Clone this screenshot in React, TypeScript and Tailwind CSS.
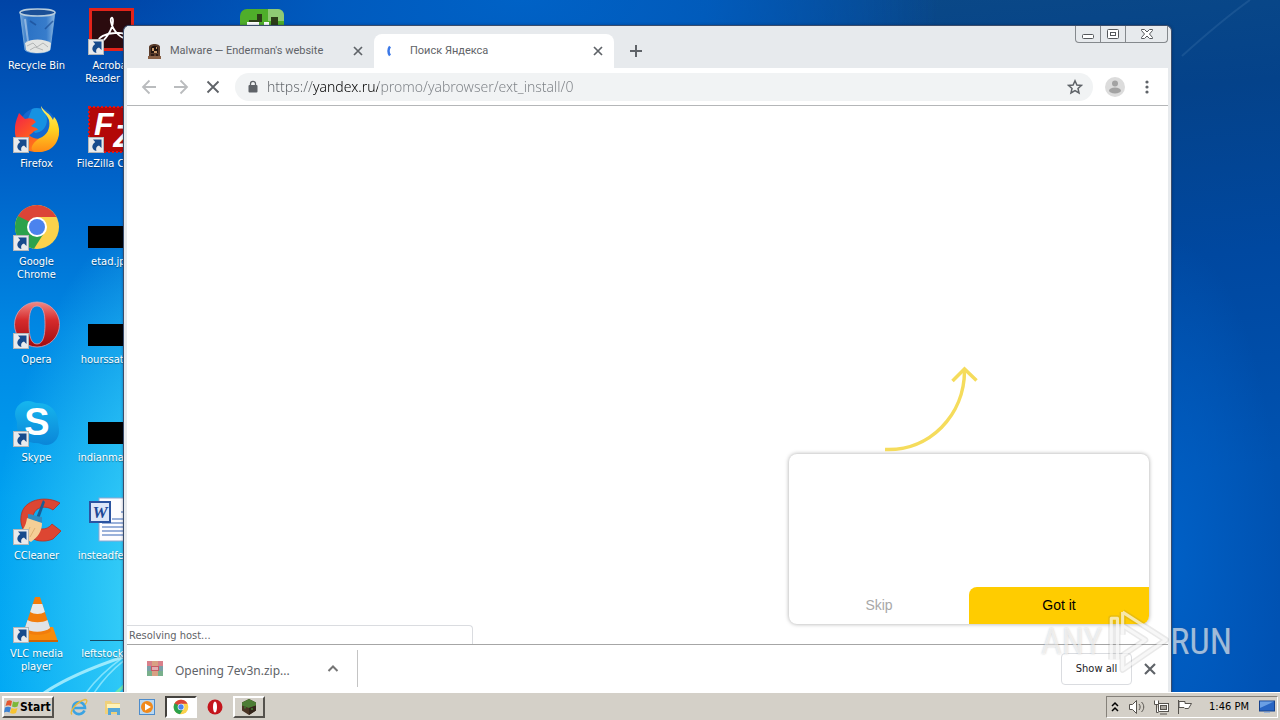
import type { ReactNode } from "react";

interface Shortcut {
  name: string;
  icon: ReactNode;
  linked?: boolean;
  place?: string;
}

const ShortcutArrow = () => (
  <svg className="absolute bottom-0 left-0 h-4 w-4" viewBox="0 0 16 16">
    <rect x="0.5" y="0.5" width="15" height="15" fill="#e9eaec" stroke="#b4b6b8" />
    <path d="M5 2.500h8.500V11L11 8.600c-2.600.8-3.400 2.400-2.600 5.400C4 13 2.600 8.400 7.200 5z" fill="#174a8c" />
  </svg>
);

const RecycleIcon = () => (
  <svg viewBox="0 0 48 48">
    <defs>
      <linearGradient id="bin" x1="0" x2="1" y1="0" y2="0">
        <stop offset="0" stopColor="#a9d0ee" stopOpacity="0.7" />
        <stop offset="0.25" stopColor="#4a8fd6" stopOpacity="0.6" />
        <stop offset="0.75" stopColor="#5c9ee0" stopOpacity="0.6" />
        <stop offset="1" stopColor="#b5d8f3" stopOpacity="0.8" />
      </linearGradient>
    </defs>
    <path d="M7 5l5 38c3 4 21 4 25 0l5-38z" fill="url(#bin)" stroke="#7fb0dc" strokeWidth="0.800" />
    <path d="M12 36c7-5 20-4 26 0l-1 7c-5 4-20 4-24 0z" fill="#e2e4e2" />
    <path d="M14 39l6-3 4 4 6-4 5 4M17 43l5-3 8 3" fill="none" stroke="#b3b6b6" />
    <ellipse cx="24.500" cy="5.500" rx="17.500" ry="3.500" fill="#1b4f96" stroke="#b8cddd" strokeWidth="1.500" />
    <path d="M32 22l8-8M17 14l6 4" fill="none" stroke="#1a4d96" strokeWidth="1.600" opacity="0.7" />
    <path d="M12 12l3 22" stroke="#fff" strokeWidth="2" opacity="0.4" />
  </svg>
);

const AcrobatIcon = () => (
  <svg viewBox="0 0 48 48">
    <rect x="1" y="1" width="45" height="43" fill="#e2231a" />
    <rect x="4" y="4" width="39" height="37" fill="#2b0b0e" />
    <path
      d="M11 34c-2-3 7-8 16-8 8-1 13 2 11 4-3 3-13-5-15-15-1-5 2-6 2-1 0 8-10 24-14 20z"
      fill="none"
      stroke="#fff"
      strokeWidth="1.800"
    />
  </svg>
);

const FirefoxIcon = () => (
  <svg viewBox="0 0 48 48">
    <defs>
      <linearGradient id="foxBody" x1="0" y1="0" x2="1" y2="1">
        <stop offset="0" stopColor="#f0204c" />
        <stop offset="0.45" stopColor="#ff5a20" />
        <stop offset="1" stopColor="#ffa516" />
      </linearGradient>
      <linearGradient id="foxTail" x1="0" y1="0" x2="0" y2="1">
        <stop offset="0" stopColor="#fff36b" />
        <stop offset="0.5" stopColor="#ffd321" />
        <stop offset="1" stopColor="#ff8a15" />
      </linearGradient>
    </defs>
    <circle cx="25" cy="21" r="18" fill="#1468cf" />
    <path d="M19 4c8-3 14 2 15 10 0 9-5 13-12 14l-8-12z" fill="#1692e2" />
    <path
      d="M2 24C2 17 4 14 6 8l6 6c3-1 5-1 8 0l3 3-5 4c3 2 6 1 7 4-5 0-5 4-9 5 5 5 13 5 18 0l12-1c-3 12-12 18-22 18C10 47 1 37 2 24z"
      fill="url(#foxBody)"
    />
    <path
      d="M28 1c0 5 6 8 8 14 2 9-3 16-9 18-7 4-13 13-3 14 14 1 23-9 22-23-1-7-3-10-5-12l-1 3C37 8 31 7 28 1z"
      fill="url(#foxTail)"
    />
  </svg>
);

const FileZillaIcon = () => (
  <svg viewBox="0 0 48 48">
    <rect x="1" y="2" width="46" height="45" fill="#b30808" stroke="#dd1717" strokeWidth="2" strokeDasharray="2 2" />
    <text x="6" y="30" fontFamily="Liberation Sans, sans-serif" fontSize="32" fontStyle="italic" fontWeight="700" fill="#fff">
      F<tspan dy="12">Z</tspan>
    </text>
  </svg>
);

const ChromeIcon = () => (
  <svg viewBox="0 0 48 48">
    <circle cx="24" cy="24" r="22" fill="#fbd24c" />
    <path d="M24 24L4.900 13A22 22 0 0 0 21 45.800L31 30z" fill="#2ba24c" />
    <path d="M24 24H13L4.900 13A22 22 0 0 1 43.500 14H24z" fill="#dc4437" />
    <path d="M4.900 13L14.500 29.500 19 20z" fill="#2ba24c" />
    <circle cx="24" cy="24" r="10" fill="#fff" />
    <circle cx="24" cy="24" r="8" fill="#4b83ee" />
  </svg>
);

const OperaIcon = () => (
  <svg viewBox="0 0 48 48">
    <defs>
      <linearGradient id="operaRed" x1="0" y1="0" x2="0" y2="1">
        <stop offset="0" stopColor="#f08a86" />
        <stop offset="0.4" stopColor="#d62b2c" />
        <stop offset="1" stopColor="#a00c10" />
      </linearGradient>
    </defs>
    <path
      fillRule="evenodd"
      d="M24 1a22 22 0 1 1 0 45a22 22 0 1 1 0-45zM24 5c-6 0-8 7-8 18.500s2 19.500 8 19.500 8-8 8-19.500S30 5 24 5z"
      fill="url(#operaRed)"
      stroke="#d8a0b0"
      strokeWidth="0.800"
    />
  </svg>
);

const SkypeIcon = () => (
  <svg viewBox="0 0 48 48">
    <defs>
      <linearGradient id="skypeBlue" x1="0" y1="0" x2="0" y2="1">
        <stop offset="0" stopColor="#16b6ee" />
        <stop offset="1" stopColor="#0a86d8" />
      </linearGradient>
    </defs>
    <path
      d="M15 2c4 0 7 2 9 2 12-1 21 8 21 19 0 3 1 5 1 9 0 8-6 14-13 14-4 0-6-2-10-2C11 44 3 34 4 24c0-3-2-5-2-9C2 8 8 2 15 2z"
      fill="url(#skypeBlue)"
    />
    <text x="24" y="36" textAnchor="middle" fontFamily="Liberation Sans, sans-serif" fontSize="38" fontWeight="700" fill="#fff">
      S
    </text>
  </svg>
);

const CCleanerIcon = () => (
  <svg viewBox="0 0 48 48">
    <path
      d="M47 6C35-1 14 1 9 15c-6 19 12 35 31 27l8-8-9-7c-7 9-19 5-19-6 0-10 11-14 20-8z"
      fill="#dd4632"
      stroke="#b8301f"
      strokeWidth="0.800"
    />
    <path d="M30 3l2 2-6 17-3-1z" fill="#1a5d95" />
    <path d="M15 17c5 0 9 3 14 3v6l-14-4z" fill="#318cc2" />
    <path d="M14 21l15 5c0 8-4 14-11 19L4 37c6-3 9-8 10-16z" fill="#f5cf96" />
    <path d="M17 30l-4 9M22 31l-5 9" stroke="#dfb071" fill="none" />
  </svg>
);

const VlcIcon = () => (
  <svg viewBox="0 0 48 48">
    <path d="M9 32h31l5 15H5z" fill="#f78b0d" />
    <path d="M5 45h40v2H5z" fill="#cf6404" />
    <path d="M22 2h5l11 34c-5 5-22 5-27 0z" fill="#f27d0c" />
    <path d="M19.800 9h9.500l2.600 8c-4 2.500-11 2.500-14.700 0z" fill="#e6eaee" />
    <path d="M14.500 25c5 3 15 3 20 0l2.600 8c-6 5-20 5-25.200 0z" fill="#e1e3e6" />
  </svg>
);

const WordIcon = () => (
  <svg viewBox="0 0 48 48">
    <rect x="11" y="1" width="36" height="43" fill="#fdfdff" stroke="#8fa7cf" />
    <path d="M14 26h30M14 30h30M14 34h30M14 38h30M24 22h20M33 15h12" stroke="#7a98ce" strokeWidth="1.500" />
    <rect x="2" y="5" width="20" height="20" fill="#dce6f8" stroke="#2b54a1" strokeWidth="2" />
    <text x="12" y="21" textAnchor="middle" fontFamily="Liberation Serif, serif" fontSize="17" fontWeight="700" fontStyle="italic" fill="#1d4796">
      W
    </text>
  </svg>
);

const BlackThumb = () => (
  <svg viewBox="0 0 48 48">
    <path d="M0 23h48v22H0z" fill="#000" />
  </svg>
);

const LineThumb = () => (
  <svg viewBox="0 0 48 48">
    <path d="M2 45.500h46" stroke="#174c66" />
  </svg>
);

const GreenAppIcon = () => (
  <svg viewBox="0 0 48 48">
    <rect x="2" y="2" width="44" height="44" rx="7" fill="#4fae2a" />
    <path d="M30 2h10a6 6 0 0 1 6 6v6H30z" fill="#8fca74" />
    <path d="M19 7h5v8h-5zM33 10h7v8h-7zM11 13h10v4H11z" fill="#2c3d18" />
    <path d="M9 15h12v4H9zM26 15h5v4h-5z" fill="#fff" />
  </svg>
);

const shortcuts: Shortcut[] = [
  { name: "Recycle Bin", icon: <RecycleIcon /> },
  { name: "Firefox", icon: <FirefoxIcon />, linked: true },
  { name: "Google\nChrome", icon: <ChromeIcon />, linked: true },
  { name: "Opera", icon: <OperaIcon />, linked: true },
  { name: "Skype", icon: <SkypeIcon />, linked: true },
  { name: "CCleaner", icon: <CCleanerIcon />, linked: true },
  { name: "VLC media\nplayer", icon: <VlcIcon />, linked: true },
  { name: "Acrobat\nReader DC", icon: <AcrobatIcon />, linked: true },
  { name: "FileZilla Client", icon: <FileZillaIcon />, linked: true },
  { name: "etad.jpg", icon: <BlackThumb /> },
  { name: "hourssat.jpg", icon: <BlackThumb /> },
  { name: "indianmar.jpg", icon: <BlackThumb /> },
  { name: "insteadfew.rtf", icon: <WordIcon /> },
  { name: "leftstock.jpg", icon: <LineThumb /> },
  { name: "", icon: <GreenAppIcon />, place: "col-start-4 row-start-1" },
];

const Wallpaper = () => (
  <>
    <div className="absolute inset-0 bg-[linear-gradient(180deg,#0044a6_0%,#0062c8_25%,#0088e4_48%,#00a0f0_72%,#00a8f4_100%)]" />
    <div className="absolute inset-0 bg-[radial-gradient(ellipse_230px_420px_at_220px_600px,#5fe8fa_0%,#3cd2f8cc_45%,transparent_100%)]" />
    <div className="absolute inset-y-0 right-0 w-2/3 bg-[linear-gradient(175deg,#0c4a86_0%,#04428a_20%,#0048a0_42%,#0052b0_70%,#0052b4_100%)] [mask-image:linear-gradient(90deg,transparent,black_60%)]" />
    <div className="absolute inset-y-0 right-0 w-[120px] bg-[radial-gradient(ellipse_110px_320px_at_10px_560px,#0060c6_0%,transparent_100%)]" />
    <div className="absolute inset-0 bg-[radial-gradient(ellipse_420px_160px_at_520px_0px,#0062c6_0%,#0060c4cc_45%,transparent_100%)]" />
    <svg className="absolute bottom-0 left-0 h-[60px] w-[124px]" viewBox="0 0 124 60" fill="none">
      <path d="M44 61C66 46 96 34 126 24" stroke="#b8f4ff" strokeWidth="3" opacity="0.8" />
      <path d="M86 61c10-14 22-25 40-38M94 61c8-12 16-22 32-34" stroke="#a5efff" strokeWidth="1.500" opacity="0.7" />
      <path d="M116 61l10-9" stroke="#6ce6b0" strokeWidth="3" />
    </svg>
    <svg className="absolute top-0 right-0 h-[70px] w-[110px]" viewBox="0 0 110 70" fill="none">
      <path d="M12 56C32 38 52 20 80 0" stroke="#4a80b5" strokeWidth="2" opacity="0.25" />
    </svg>
  </>
);

const CloseGlyph = ({ className }: { className: string }) => (
  <svg className={className} viewBox="0 0 16 16" fill="none" stroke="#5f6368" strokeWidth="1.700">
    <path d="M4 4l8 8M12 4l-8 8" />
  </svg>
);

const DoorFavicon = () => (
  <svg className="h-4 w-4 shrink-0" viewBox="0 0 16 16">
    <path d="M3 15V4c0-4 11-4 11 0v11z" fill="#5a3c2b" />
    <path d="M5 10V5c1-3 6-3 7 0v5z" fill="#20130f" />
    <path d="M6 5h2v3H6zM10 4h1v2h-1zM8 8h3v2H8z" fill="#c99a6b" />
    <path d="M2 13h13v3H2z" fill="#8a6146" />
    <path d="M5 11h3v2H5zM10 11h2v2h-2z" fill="#2e1b14" />
  </svg>
);

const TitleBar = () => (
  <header className="flex h-[42px] items-end bg-[#e7eaed] pl-[7px] font-[Roboto,sans-serif]">
    <div className="flex h-[34px] w-60 items-center gap-2 pr-2 pl-3 text-[#5f6368]">
      <DoorFavicon />
      <span className="flex-1 whitespace-nowrap">Malware — Enderman's website</span>
      <button aria-label="Close tab">
        <CloseGlyph className="h-4 w-4" />
      </button>
    </div>
    <div className="flex h-[34px] w-60 items-center gap-2 rounded-t-lg bg-white pr-2 pl-3 text-[#5f6368]">
      <svg className="h-4 w-4 shrink-0" viewBox="0 0 16 16" fill="none">
        <path d="M4 3.500C2 6 2 10 4 12.500" stroke="#3b78e7" strokeWidth="2.500" />
      </svg>
      <span className="flex-1 whitespace-nowrap">Поиск Яндекса</span>
      <button aria-label="Close tab">
        <CloseGlyph className="h-4 w-4" />
      </button>
    </div>
    <button aria-label="New tab" className="ml-2 flex h-[34px] w-7 items-center justify-center">
      <svg className="h-4 w-4" viewBox="0 0 16 16" stroke="#5f6368" strokeWidth="2">
        <path d="M8 2v12M2 8h12" />
      </svg>
    </button>
    <div className="ml-auto flex h-[17px] self-start rounded-b border border-t-0 border-[#85898d]">
      <button aria-label="Minimize" className="flex w-6 items-center justify-center">
        <svg className="h-4 w-6" viewBox="0 0 24 16" fill="#fff" stroke="#55585c">
          <rect x="6.500" y="8.500" width="11" height="4" rx="1" />
        </svg>
      </button>
      <button aria-label="Restore" className="flex w-[26px] items-center justify-center border-x border-[#85898d]">
        <svg className="h-4 w-6" viewBox="0 0 24 16" fill="#fff" stroke="#55585c">
          <rect x="6.500" y="3.500" width="11" height="9" rx="1" />
          <rect x="9.500" y="6.500" width="5" height="3" />
        </svg>
      </button>
      <button aria-label="Close" className="flex w-[41px] items-center justify-center">
        <svg className="h-4 w-6" viewBox="0 0 24 16" fill="#fff" stroke="#55585c">
          <path d="M6.500 3.500h3l2.500 2.500 2.500-2.500h3v1L14.500 8l3 3.500v1h-3L12 10l-2.500 2.500h-3v-1l3-3.500-3-3.500z" />
        </svg>
      </button>
    </div>
  </header>
);

const Toolbar = () => (
  <div className="flex h-[38px] items-center border-b border-[#b4b6b8] bg-white pl-1.5">
    <button aria-label="Back" className="flex w-8 justify-center">
      <svg className="h-4 w-4" viewBox="0 0 16 16" fill="none" stroke="#babcbe" strokeWidth="1.800">
        <path d="M15 8H2M8.500 1.500L2 8l6.500 6.500" />
      </svg>
    </button>
    <button aria-label="Forward" className="flex w-8 justify-center">
      <svg className="h-4 w-4" viewBox="0 0 16 16" fill="none" stroke="#babcbe" strokeWidth="1.800">
        <path d="M1 8h13M7.500 1.500L14 8l-6.500 6.500" />
      </svg>
    </button>
    <button aria-label="Stop" className="flex w-8 justify-center">
      <svg className="h-4 w-4" viewBox="0 0 16 16" fill="none" stroke="#5f6368" strokeWidth="1.800">
        <path d="M2.500 2.500l11 11M13.500 2.500l-11 11" />
      </svg>
    </button>
    <div className="ml-1.5 flex h-7 flex-1 items-center rounded-full bg-[#f1f3f4] px-2.5">
      <svg className="h-4 w-4 shrink-0" viewBox="0 0 16 16">
        <rect x="3.500" y="6" width="9" height="7.500" rx="1" fill="#5f6368" />
        <path d="M5.500 6.500V4.800a2.500 2.500 0 0 1 5 0v1.700" fill="none" stroke="#5f6368" strokeWidth="1.300" />
      </svg>
      <input
        aria-label="Address"
        className="ml-1.5 min-w-0 flex-1 bg-[linear-gradient(90deg,#5f6368_46px,#000_46px,#000_111px,#7b7f84_111px)] bg-clip-text font-['Noto_Sans',sans-serif] text-sm font-light text-transparent outline-none"
        defaultValue="https://yandex.ru/promo/yabrowser/ext_install/0"
      />
      <button aria-label="Bookmark this page">
        <svg className="h-4 w-4" viewBox="0 0 16 16" fill="none" stroke="#5f6368" strokeWidth="1.500">
          <path d="M8 1.800l1.900 4.200 4.500.4-3.400 3 1 4.500L8 11.500l-4 2.400 1-4.500-3.400-3 4.500-.4z" />
        </svg>
      </button>
    </div>
    <button aria-label="Profile" className="ml-3">
      <svg className="h-5 w-5" viewBox="0 0 20 20">
        <circle cx="10" cy="10" r="10" fill="#dcdcdc" />
        <circle cx="10" cy="6.500" r="3" fill="#a3a3a3" />
        <ellipse cx="10" cy="13.500" rx="6" ry="3" fill="#a3a3a3" />
      </svg>
    </button>
    <button aria-label="Menu" className="mr-[13px] ml-3.5">
      <svg className="h-4 w-4" viewBox="0 0 16 16" fill="#5f6368">
        <circle cx="8" cy="3" r="1.600" />
        <circle cx="8" cy="8" r="1.600" />
        <circle cx="8" cy="13" r="1.600" />
      </svg>
    </button>
  </div>
);

const Promo = () => (
  <div className="absolute right-[19px] bottom-5 w-[360px]">
    <svg className="ml-24 h-[88px] w-24" viewBox="0 0 96 88" fill="none" stroke="#f5dc5c" strokeWidth="3.500">
      <path d="M0 83.500c44 2 80-34 79.500-80" />
      <path d="M67.500 15L79.500 3l12 11.500" />
    </svg>
    <div className="flex h-[170px] items-end overflow-hidden rounded-lg bg-white font-['Liberation_Sans',sans-serif] text-sm shadow-[0_0_4px_rgba(0,0,0,0.35)]">
      <button className="h-[37px] flex-1 pb-0.5 text-[#a8a8a8]">Skip</button>
      <button className="h-[37px] flex-1 rounded-tl-lg bg-[#ffcc00] pb-0.5 text-black">Got it</button>
    </div>
  </div>
);

const DownloadBar = () => (
  <footer className="flex h-12 items-center border-t border-[#a6a6a6] bg-white">
    <div className="flex h-[37px] w-[231px] items-center border-r border-[#c4c4c4] pr-4 pl-5">
      <svg className="h-4 w-4 shrink-0" viewBox="0 0 16 16">
        <path d="M0 0h16v5H0z" fill="#d9808b" />
        <path d="M0 5h16v5H0z" fill="#7aa0a8" />
        <path d="M0 10h16v5H0z" fill="#79b08c" />
        <path d="M5 0h6v15H5z" fill="#d8a184" />
        <path d="M4 5h8v5H4z" fill="#c85a66" />
        <path d="M6 6v3M8 6v3M10 6v3" stroke="#fff" />
      </svg>
      <span className="ml-3 flex-1 pt-1 font-['Noto_Sans',sans-serif] text-xs whitespace-nowrap text-[#5f6368]">
        Opening 7ev3n.zip...
      </span>
      <button aria-label="Download options">
        <svg className="h-4 w-4" viewBox="0 0 16 16" fill="none" stroke="#757575" strokeWidth="2">
          <path d="M3.500 10L8 5.500l4.500 4.500" />
        </svg>
      </button>
    </div>
    <button className="ml-auto h-8 w-[71px] rounded border border-[#dadce0] leading-3 text-[#202124]">Show all</button>
    <button aria-label="Close downloads" className="mx-2.5">
      <CloseGlyph className="h-4 w-4 scale-125" />
    </button>
  </footer>
);

const Watermark = () => (
  <div className="pointer-events-none absolute right-12 bottom-3 z-20 flex h-[76px] items-center font-['Roboto_Condensed','Liberation_Sans_Narrow',Roboto,sans-serif] text-4xl leading-none text-white/60 [text-shadow:0_0_2px_rgba(90,90,90,0.3)]">
    <span>ANY</span>
    <svg className="h-[68px] w-[68px]" viewBox="0 0 66 66" fill="none" strokeLinejoin="round">
      <path d="M15 50V10H9v40M20 4v22M20 4l42 27-42 29V46l22-15-22-14" stroke="#666" strokeWidth="6" opacity="0.14" />
      <path d="M15 50V10H9v40M20 4v22M20 4l42 27-42 29V46l22-15-22-14" stroke="#fff" strokeWidth="3" opacity="0.65" />
    </svg>
    <span>RUN</span>
  </div>
);

const BrowserWindow = () => (
  <main className="absolute top-[25px] right-[108px] bottom-0 left-[123px] z-10 flex flex-col rounded-t-md border border-b-0 border-[#3b4d6b] bg-[#e7eaed] px-[3px] shadow-[0_0_3px_rgba(0,20,60,0.4)]">
    <TitleBar />
    <Toolbar />
    <section className="relative flex-1 bg-white">
      <Promo />
      <div className="absolute bottom-0 left-0 h-[19px] w-[346px] rounded-tr border-t border-r border-[#dadce0] pl-0.5 leading-5 text-[#5f6368]">
        Resolving host...
      </div>
    </section>
    <DownloadBar />
  </main>
);

const Taskbar = () => (
  <nav className="flex h-7 shrink-0 items-center border-t border-white bg-[#d4d0c8] pl-0.5">
    <button className="flex h-[22px] w-[52px] items-center border-2 border-t-white border-r-[#55524d] border-b-[#55524d] border-l-white text-xs font-bold text-black">
      <svg className="h-4 w-4 shrink-0" viewBox="0 0 16 16">
        <path d="M3 2c2-1 3-1 5 0L7 7C5 6 3.500 6 1.500 7z" fill="#e4572e" />
        <path d="M9 2.500c2 1 4 1 6 0l-1.500 5c-2 1-3.500 1-5.500 0z" fill="#7cb83a" />
        <path d="M1 8.500c2-1 4-1 6 0l-1.500 5c-2-1-3.500-1-5.500 0z" fill="#3c82d2" />
        <path d="M7.500 9c2 1 4 1 6 0L12 14c-2 1-4 1-6 0z" fill="#f7c331" />
      </svg>
      Start
    </button>
    <div className="ml-4 flex items-center gap-4">
      <button aria-label="Internet Explorer">
        <svg className="h-[18px] w-[18px]" viewBox="0 0 18 18" fill="none">
          <path d="M14.500 12.500A6 6 0 1 1 15 10H4.500" stroke="#3aa3e3" strokeWidth="2.600" />
          <path d="M2 16.500C-1 14 6 4 15 1.500c3 0 2 3 0 5" stroke="#e9b93c" strokeWidth="1.300" />
        </svg>
      </button>
      <button aria-label="File Explorer">
        <svg className="h-[18px] w-[18px]" viewBox="0 0 18 18">
          <path d="M1 3h6l1 2h8v11H1z" fill="#efd07a" />
          <path d="M3 6h13v4H3z" fill="#fff3b8" />
          <path d="M4 10h12v7h-3v-3H7v3H4z" fill="#56a7d8" />
        </svg>
      </button>
      <button aria-label="Media Player">
        <svg className="h-[18px] w-[18px]" viewBox="0 0 18 18">
          <rect x="1.500" y="1.500" width="15" height="15" fill="#b9d8f2" stroke="#4d8ccb" />
          <circle cx="9" cy="9" r="6" fill="#f08a1d" />
          <path d="M7 5.500l6 3.500-6 3.500z" fill="#fff" />
        </svg>
      </button>
    </div>
    <button
      aria-label="Google Chrome"
      className="ml-[9px] flex h-[22px] w-8 items-center justify-center border-2 border-t-[#44423e] border-r-white border-b-white border-l-[#44423e] bg-white"
    >
      <span className="h-4 w-4">
        <ChromeIcon />
      </span>
    </button>
    <button aria-label="Opera" className="ml-2.5">
      <svg className="h-4 w-4" viewBox="0 0 16 16">
        <circle cx="8" cy="8" r="7.500" fill="#c4151c" />
        <ellipse cx="8" cy="8" rx="2" ry="5.500" fill="#fff" />
      </svg>
    </button>
    <button
      aria-label="Minecraft"
      className="ml-2.5 flex h-[22px] w-8 items-center justify-center border-2 border-t-white border-r-[#55524d] border-b-[#55524d] border-l-white"
    >
      <svg className="h-4 w-4" viewBox="0 0 16 16">
        <path d="M8 0l7 3.500v8L8 16l-7-4.500v-8z" fill="#4a3424" />
        <path d="M8 0l7 3.500v3L8 9 1 6.500v-3z" fill="#4c7c34" />
        <path d="M8 9v7l7-4.500v-5z" fill="#33241a" />
        <path d="M3 7.500h2v2H3zM10 9h2v2h-2z" fill="#3e6a2a" />
      </svg>
    </button>
    <div className="mr-0.5 ml-auto flex h-[22px] w-[172px] items-center border border-t-[#85817a] border-r-white border-b-white border-l-[#85817a] pr-0.5 pl-1 text-black">
      <button aria-label="Show hidden icons">
        <svg className="h-3 w-2" viewBox="0 0 8 12" fill="none" stroke="#000" strokeWidth="1.500">
          <path d="M1 5l3-3 3 3M1 10l3-3 3 3" />
        </svg>
      </button>
      <svg className="ml-2.5 h-4 w-4" viewBox="0 0 16 16" fill="#fff" stroke="#56534e">
        <path d="M0.500 5.500h3l4-4v13l-4-4h-3z" />
        <path d="M10 5c1.500 2 1.500 4 0 6M12.500 3c3 3 3 7 0 10" fill="none" />
      </svg>
      <svg className="ml-2 h-4 w-4" viewBox="0 0 16 16" fill="#fff" stroke="#56534e">
        <rect x="5.500" y="4.500" width="10" height="8" />
        <rect x="7.500" y="6.500" width="6" height="4" fill="#a9a59e" />
        <path d="M7 15h7M1.500 1.500v4h4v-4M3.500 5.500v8h2" />
      </svg>
      <svg className="ml-2 h-4 w-4" viewBox="0 0 16 16" fill="#fff" stroke="#56534e">
        <path d="M1.500 1v14M2 2.500h6v2h6.500l-3 5H8l-1-1H2z" />
      </svg>
      <time className="flex-1 pt-0.5 pl-1.5 text-center whitespace-nowrap">1:46 PM</time>
      <button aria-label="Show desktop">
        <svg className="h-4 w-4" viewBox="0 0 16 16">
          <rect x="0.500" y="2" width="15" height="10" fill="#2866c4" stroke="#17428c" />
          <path d="M1 2.500h14L1 9z" fill="#6a9fe4" />
          <path d="M5 13h6v1H5z" fill="#9bb5da" />
        </svg>
      </button>
    </div>
  </nav>
);

const App = () => {
  return (
    <div className="flex h-screen flex-col overflow-hidden font-['DejaVu_Sans_Condensed','Noto_Sans',sans-serif] text-[11px]">
      <div className="relative flex-1 overflow-hidden">
        <Wallpaper />
        <div className="relative grid auto-cols-[75px] grid-flow-col grid-rows-[repeat(7,98px)] pt-[7px]">
          {shortcuts.map((item, i) => (
            <div key={i} className={`flex w-[73px] flex-col items-center ${item.place ?? ""}`}>
              <div className="relative h-12 w-12">
                {item.icon}
                {item.linked && <ShortcutArrow />}
              </div>
              <span className="mt-1 text-center leading-[13px] whitespace-pre text-white [text-shadow:0_1px_1px_rgba(0,0,0,0.4)]">
                {item.name}
              </span>
            </div>
          ))}
        </div>
        <BrowserWindow />
        <Watermark />
      </div>
      <Taskbar />
    </div>
  );
};

export default App;
